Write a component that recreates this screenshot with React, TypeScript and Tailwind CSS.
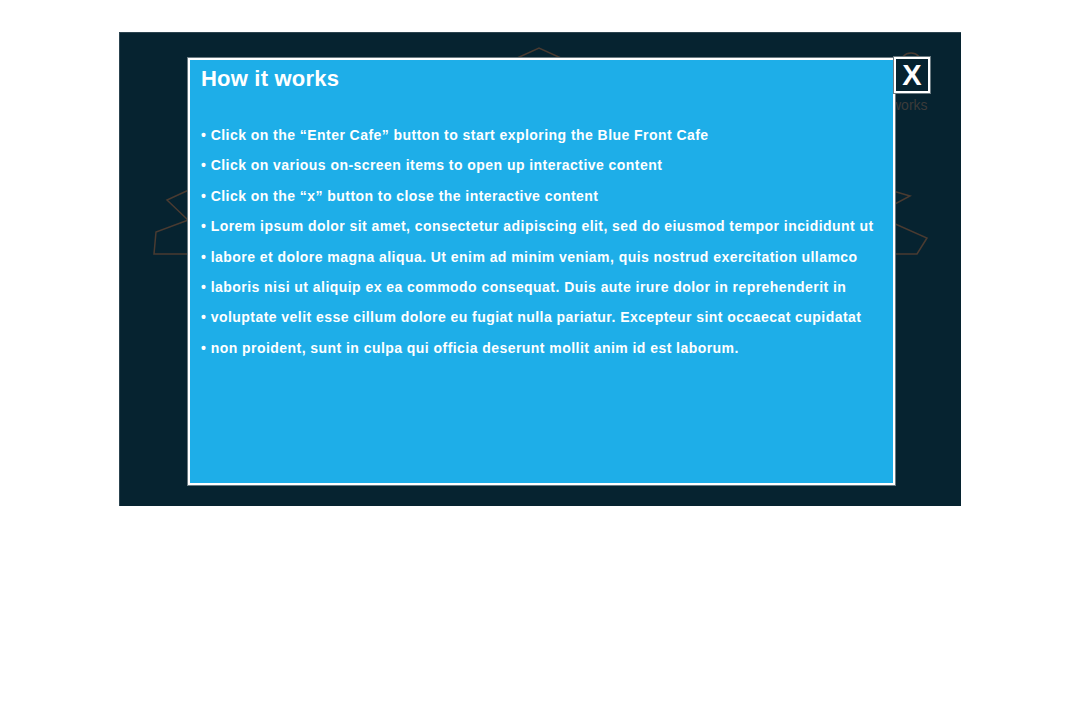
import React from 'react';

const steps = [
  'Click on the \u201cEnter Cafe\u201d button to start exploring the Blue Front Cafe',
  'Click on various on-screen items to open up interactive content',
  'Click on the \u201cx\u201d button to close the interactive content',
  'Lorem ipsum dolor sit amet, consectetur adipiscing elit, sed do eiusmod tempor incididunt ut',
  'labore et dolore magna aliqua. Ut enim ad minim veniam, quis nostrud exercitation ullamco',
  'laboris nisi ut aliquip ex ea commodo consequat. Duis aute irure dolor in reprehenderit in',
  'voluptate velit esse cillum dolore eu fugiat nulla pariatur. Excepteur sint occaecat cupidatat',
  'non proident, sunt in culpa qui officia deserunt mollit anim id est laborum.',
];

const Backdrop: React.FC = () => (
  <svg className="absolute inset-0" width="842" height="474" viewBox="119 32 842 474" fill="none">
    <g stroke="#4a3b31" strokeWidth="1.5" strokeLinejoin="miter">
      <polyline points="505,62 538,47 571,62" />
      <polyline points="190,188 166,199 188,220" />
      <polyline points="190,218 155,231 153,253 190,253" />
      <polyline points="892,190 909,195 892,204" />
      <polyline points="892,222 926,237 916,253 892,253" />
      <circle cx="910" cy="63" r="11" />
    </g>
    <text x="890" y="109" fill="#3c3b3a" fontSize="14" fontFamily="Liberation Sans, Arial, sans-serif">
      works
    </text>
  </svg>
);

const App: React.FC = () => {
  return (
    <div className="w-[1080px] h-[720px] bg-white pt-[32px] pl-[119px] font-['Liberation_Sans',Arial,sans-serif]">
      <div className="relative w-[842px] h-[474px] bg-[#062330] border-t border-l border-[#2c4450]">
        <Backdrop />

        <div className="absolute left-[68px] top-[25px] w-[707px] h-[427px] bg-[#1eaee8] border-2 border-white shadow-[0_0_0_1px_#6b7b82] px-[11px]">
          <h2 className="text-white font-bold text-[22px] tracking-[0.2px] leading-none mt-[8px]">How it works</h2>
          <ul className="mt-[36px] flex flex-col gap-[12px]">
            {steps.map((s, i) => (
              <li key={i} className="text-white font-bold text-[14px] leading-[18.4px] tracking-[0.45px] whitespace-nowrap">
                &bull; {s}
              </li>
            ))}
          </ul>
        </div>

        <button className="absolute left-[774px] top-[24px] w-[36px] h-[36px] bg-[#062330] border-2 border-white shadow-[0_0_0_1px_#6b7b82] flex items-center justify-center text-white text-[29px] font-bold leading-none">
          X
        </button>
      </div>
    </div>
  );
};

export default App;
